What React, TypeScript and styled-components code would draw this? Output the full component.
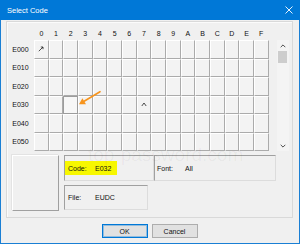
import React from 'react';
import styled, { createGlobalStyle } from 'styled-components';

const GlobalStyle = createGlobalStyle`
  html, body { margin: 0; padding: 0; background: #f0f0f0; }
  body { font-family: "Liberation Sans", Arial, sans-serif; }
  * { box-sizing: border-box; }
`;

const Window = styled.div`
  position: relative;
  width: 300px;
  height: 244px;
  display: flex;
  flex-direction: column;
  background: #f0f0f0;
  overflow: hidden;
`;

const TitleBar = styled.div`
  height: 20px;
  flex: none;
  background: #0078d7;
  color: #fff;
  display: flex;
  align-items: center;
  justify-content: space-between;
  padding: 0 7px 0 7px;
  font-size: 7.5px;
`;

const Body = styled.div`
  flex: 1;
  display: flex;
  flex-direction: column;
  border: 1px solid #1a7fd4;
  border-top: none;
  padding: 1px 6px 0 5px;
`;

const Frame = styled.div`
  height: 197px;
  flex: none;
  border: 1px solid #d9d9d9;
  box-shadow: inset 1px 1px 0 #fbfbfb;
  display: flex;
  flex-direction: column;
`;

const Matrix = styled.div`
  display: flex;
`;

const Table = styled.div`
  display: flex;
  flex-direction: column;
`;

const TableRow = styled.div<{ $h: number }>`
  display: grid;
  grid-template-columns: 27px repeat(16, 14.667px);
  height: ${(p) => p.$h}px;
`;

const ColHead = styled.div`
  display: flex;
  align-items: flex-end;
  justify-content: center;
  padding-bottom: 2px;
  font-size: 7px;
  line-height: 8px;
  color: #111;
`;

const RowHead = styled.div`
  display: flex;
  align-items: center;
  justify-content: center;
  font-size: 7px;
  color: #111;
`;

const Cell = styled.div<{ $selected?: boolean }>`
  display: flex;
  align-items: center;
  justify-content: center;
  font-size: 8px;
  line-height: 8px;
  color: #222;
  background: #f3f3f3;
  border-top: 1px solid #ffffff;
  border-left: 1px solid #ffffff;
  border-right: 1px solid #ababab;
  border-bottom: 1px solid #ababab;
  ${(p) =>
    p.$selected &&
    `
    border: 1px solid #9c9c9c;
    background: #f7f7f7;
    box-shadow: 0 1px 0 #fff;
  `}
`;

const Scrollbar = styled.div`
  width: 12px;
  height: 111px;
  margin: 18px 0 0 8px;
  background: #f4f4f4;
  display: flex;
  flex-direction: column;
  align-items: center;
`;

const ScrollArrow = styled.div`
  height: 11px;
  width: 100%;
  display: flex;
  align-items: center;
  justify-content: center;
`;

const ScrollSpace = styled.div`
  flex: 1;
`;

const Thumb = styled.div`
  width: 9px;
  height: 12px;
  background: #cdcdcd;
`;

const InfoArea = styled.div`
  display: flex;
  gap: 5px;
  margin: 4px 0 0 5px;
`;

const Preview = styled.div`
  width: 47px;
  height: 56px;
  background: #f0f0f0;
  border-top: 1px solid #ffffff;
  border-left: 1px solid #ffffff;
  border-right: 1px solid #a0a0a0;
  border-bottom: 1px solid #a0a0a0;
  box-shadow: -1px -1px 0 #e3e3e3;
`;

const InfoPanel = styled.div`
  display: flex;
  flex-direction: column;
  gap: 4px;
`;

const InfoRow = styled.div`
  display: flex;
`;

const InfoBox = styled.div<{ $w: number; $h: number; $pad: number }>`
  width: ${(p) => p.$w}px;
  height: ${(p) => p.$h}px;
  display: flex;
  align-items: center;
  padding-left: ${(p) => p.$pad}px;
  border-top: 1px solid #a0a0a0;
  border-left: 1px solid #a0a0a0;
  border-right: 1px solid #dcdcdc;
  border-bottom: 1px solid #dcdcdc;
  font-size: 7px;
  color: #111;
`;

const Highlight = styled.div`
  width: 52px;
  height: 14px;
  background: #f7f700;
  display: flex;
  align-items: center;
  padding-left: 3px;
`;

const FieldLabel = styled.span<{ $w: number }>`
  display: inline-block;
  width: ${(p) => p.$w}px;
`;

const ButtonRow = styled.div`
  display: flex;
  justify-content: center;
  gap: 4px;
  margin-top: 6px;
`;

const Button = styled.div<{ $primary?: boolean }>`
  width: 46px;
  height: 14px;
  display: flex;
  align-items: center;
  justify-content: center;
  font-size: 7px;
  color: #111;
  background: #e1e1e1;
  border: 1px solid ${(p) => (p.$primary ? '#0078d7' : '#adadad')};
  box-shadow: ${(p) => (p.$primary ? 'inset 0 0 0 1px rgba(0,120,215,0.35)' : 'none')};
`;

const ArrowOverlay = styled.svg`
  position: absolute;
  left: 76px;
  top: 88px;
  pointer-events: none;
`;

const Watermark = styled.div`
  position: absolute;
  left: 88px;
  top: 144px;
  font-size: 19px;
  font-family: "Liberation Sans", Arial, sans-serif;
  color: rgba(0, 0, 0, 0.045);
  pointer-events: none;
  white-space: nowrap;
`;

const HEX = ['0', '1', '2', '3', '4', '5', '6', '7', '8', '9', 'A', 'B', 'C', 'D', 'E', 'F'];
const ROWS = ['E000', 'E010', 'E020', 'E030', 'E040', 'E050'];

const TinyArrow = () => (
  <svg width="6" height="6" viewBox="0 0 6 6">
    <path d="M0.8 5.2 L5 1" stroke="#222" strokeWidth="0.8" />
    <path d="M2.8 1 L5 1 L5 3.2" stroke="#222" strokeWidth="0.8" fill="none" />
  </svg>
);

const Caret = () => (
  <svg width="6" height="5" viewBox="0 0 6 5">
    <path d="M0.8 4 L3 1 L5.2 4" stroke="#222" strokeWidth="0.8" fill="none" />
  </svg>
);

const Chevron = ({ down }: { down?: boolean }) => (
  <svg width="6" height="4" viewBox="0 0 6 4">
    <path
      d={down ? 'M0.7 0.8 L3 3.1 L5.3 0.8' : 'M0.7 3.2 L3 0.9 L5.3 3.2'}
      stroke="#505050"
      strokeWidth="1"
      fill="none"
    />
  </svg>
);

function cellContent(r: number, c: number) {
  if (r === 0 && c === 0) return <TinyArrow />;
  if (r === 3 && c === 7) return <Caret />;
  return null;
}

export default function App() {
  return (
    <>
      <GlobalStyle />
      <Window>
        <TitleBar>
          <span>Select Code</span>
          <svg width="8" height="8" viewBox="0 0 8 8">
            <path d="M0.5 0.5 L7.5 7.5 M7.5 0.5 L0.5 7.5" stroke="#fff" strokeWidth="0.9" />
          </svg>
        </TitleBar>
        <Body>
          <Frame>
            <Matrix>
              <Table>
                <TableRow $h={18}>
                  <div />
                  {HEX.map((h) => (
                    <ColHead key={h}>{h}</ColHead>
                  ))}
                </TableRow>
                {ROWS.map((label, r) => (
                  <TableRow key={label} $h={18.5}>
                    <RowHead>{label}</RowHead>
                    {HEX.map((h, c) => (
                      <Cell key={h} $selected={r === 3 && c === 2}>
                        {cellContent(r, c)}
                      </Cell>
                    ))}
                  </TableRow>
                ))}
              </Table>
              <Scrollbar>
                <ScrollArrow>
                  <Chevron />
                </ScrollArrow>
                <Thumb />
                <ScrollSpace />
                <ScrollArrow>
                  <Chevron down />
                </ScrollArrow>
              </Scrollbar>
            </Matrix>
            <InfoArea>
              <Preview />
              <InfoPanel>
                <InfoRow>
                  <InfoBox $w={90} $h={26} $pad={0}>
                    <Highlight>
                      <FieldLabel $w={27}>Code:</FieldLabel>
                      <span>E032</span>
                    </Highlight>
                  </InfoBox>
                  <InfoBox $w={122} $h={26} $pad={2}>
                    <FieldLabel $w={28}>Font:</FieldLabel>
                    <span>All</span>
                  </InfoBox>
                </InfoRow>
                <InfoBox $w={84} $h={25} $pad={3}>
                  <FieldLabel $w={27}>File:</FieldLabel>
                  <span>EUDC</span>
                </InfoBox>
              </InfoPanel>
            </InfoArea>
          </Frame>
          <ButtonRow>
            <Button $primary>OK</Button>
            <Button>Cancel</Button>
          </ButtonRow>
        </Body>
        <Watermark>top-password.com</Watermark>
        <ArrowOverlay width="28" height="20" viewBox="0 0 28 20">
          <path d="M24 3.7 L8.1 13.2" stroke="#f7941d" strokeWidth="1.6" strokeLinecap="round" />
          <path d="M3 16.3 L10 16.2 L6.4 10.2 Z" fill="#f7941d" />
        </ArrowOverlay>
      </Window>
    </>
  );
}
